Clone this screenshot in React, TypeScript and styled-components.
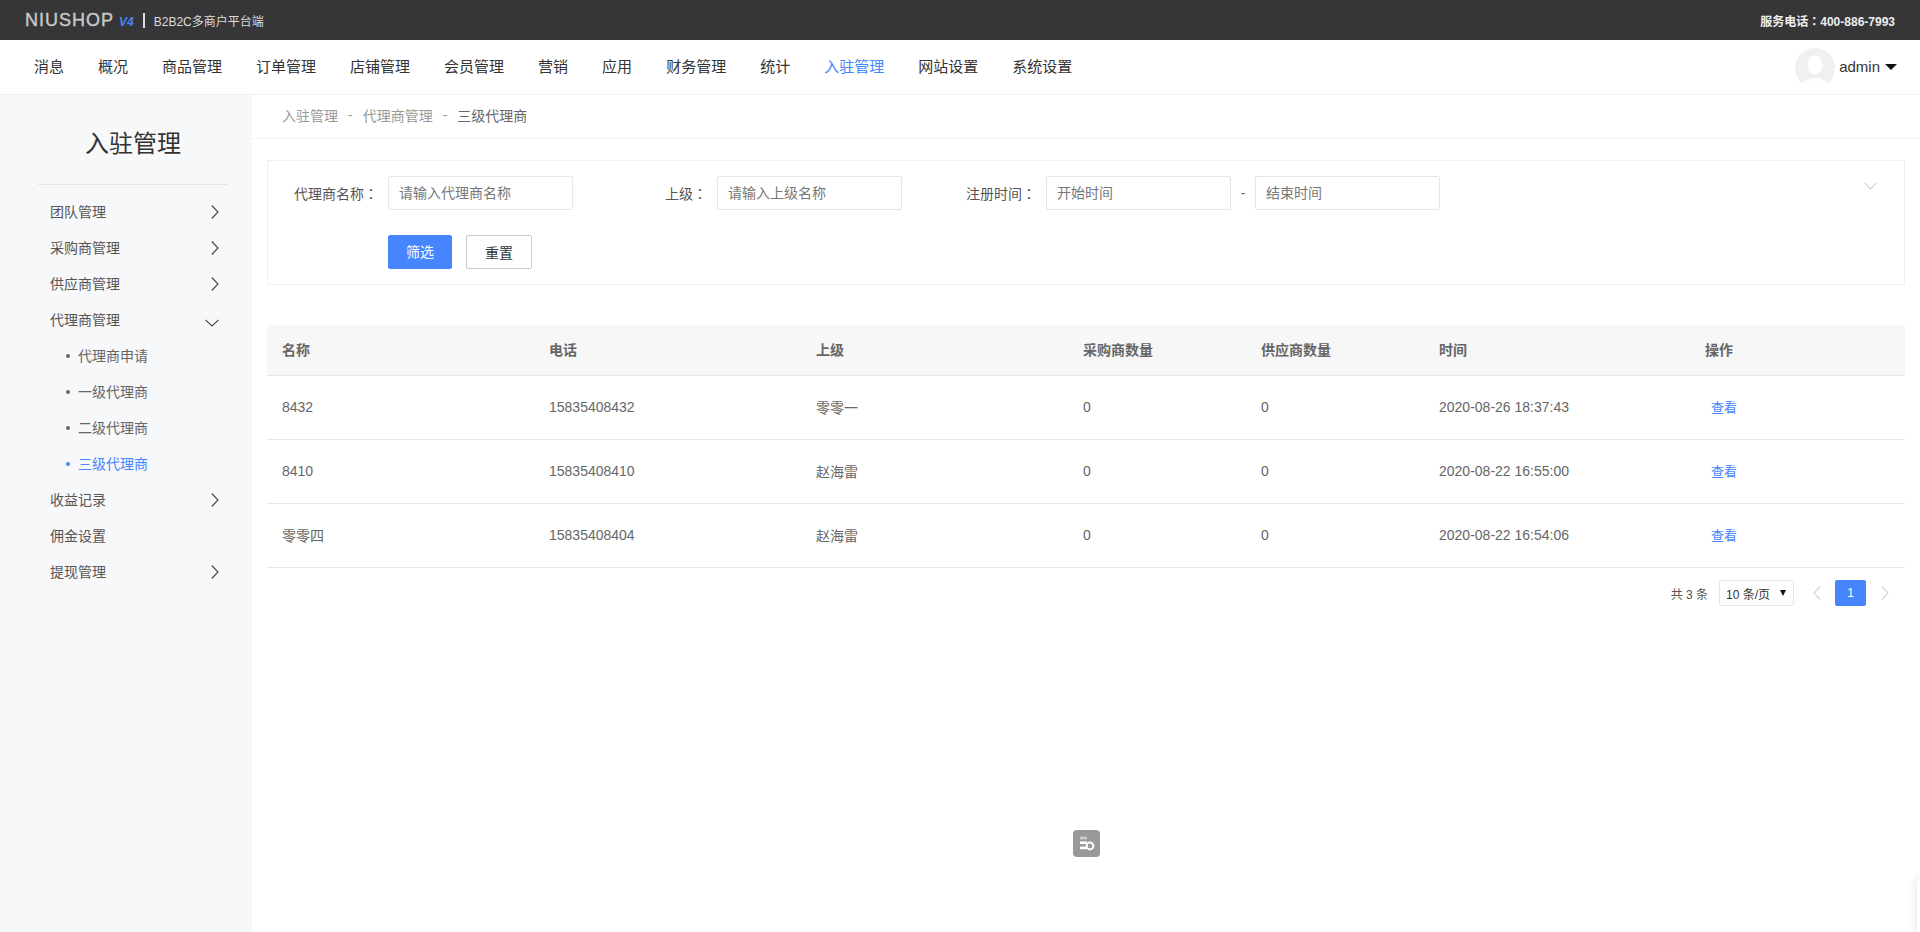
import React from "react";
import styled, { createGlobalStyle } from "styled-components";

const blue = "#4685fd";

const GlobalStyle = createGlobalStyle`
  * {
    box-sizing: border-box;
  }

  html,
  body {
    margin: 0;
    background: #fff;
    font-family: "Liberation Sans", "Noto Sans CJK SC", sans-serif;
    font-size: 14px;
    color: #666;
  }
`;

const Page = styled.div`
  position: relative;
  display: flex;
  flex-direction: column;
  height: 932px;
  overflow: hidden;
`;

const TopBar = styled.header`
  display: flex;
  align-items: center;
  justify-content: space-between;
  flex: none;
  height: 40px;
  padding: 0 25px;
  background: #363638;
  color: #ddd;
  font-size: 12px;
`;

const Brand = styled.div`
  display: flex;
  align-items: center;
`;

const LogoName = styled.span`
  color: #c9c9c9;
  font-size: 18px;
  letter-spacing: 1px;
  line-height: 40px;
  -webkit-text-stroke: 0.4px #c9c9c9;
`;

const LogoVersion = styled.span`
  margin: 3px 0 0 5px;
  color: ${blue};
  font-size: 12px;
  font-style: italic;
  font-weight: 700;
`;

const BrandDivider = styled.i`
  width: 2px;
  height: 15px;
  margin: 0 9px;
  background: #ddd;
`;

/* Fullwidth colon sits centred in the TC cut, as it does in the reference */
const Colon = styled.span`
  font-family: "Noto Sans CJK TC", sans-serif;
`;

const Hotline = styled.strong`
  color: #eee;
  font-weight: 700;
`;

const MainNav = styled.nav`
  display: flex;
  align-items: center;
  flex: none;
  height: 55px;
  padding: 0 23px 0 34px;
  border-bottom: 1px solid #f1f1f1;
`;

const NavItems = styled.div`
  display: flex;
  flex: 1;
  gap: 34px;
`;

const NavItem = styled.a<{ $active?: boolean }>`
  color: ${(p) => (p.$active ? blue : "#333")};
  font-size: 15px;
  line-height: 20px;
`;

const UserBox = styled.div`
  display: flex;
  align-items: center;
  color: #333;
  font-size: 15px;
`;

const Avatar = styled.svg`
  display: block;
  width: 40px;
  height: 40px;
  margin: 2px 4px 0 0;
`;

const UserName = styled.span`
  margin-bottom: 2px;
`;

const UserCaret = styled.i`
  width: 0;
  height: 0;
  margin-left: 5px;
  border-style: solid;
  border-width: 6px 6px 0;
  border-color: #111 transparent transparent;
`;

const Body = styled.div`
  display: flex;
  flex: 1;
  min-height: 0;
`;

const Sidebar = styled.aside`
  flex: none;
  width: 252px;
  background: #f7f8fa;
`;

const SidebarTitle = styled.h2`
  margin: 0 24px 9px 38px;
  padding: 25px 0 16px;
  border-bottom: 1px solid #e6e6e6;
  color: #333;
  font-size: 24px;
  font-weight: 400;
  line-height: 48px;
  text-align: center;
`;

const MenuRow = styled.a`
  display: flex;
  align-items: center;
  justify-content: space-between;
  height: 36px;
  padding: 0 33px 2px 50px;
  color: #555;

  svg {
    margin-top: 2px;
  }
`;

const SubRow = styled.a<{ $active?: boolean }>`
  display: flex;
  align-items: center;
  gap: 8px;
  height: 36px;
  padding: 0 0 2px 66px;
  color: ${(p) => (p.$active ? blue : "#666")};

  &::before {
    content: "";
    width: 4px;
    height: 4px;
    margin-top: 2px;
    border-radius: 50%;
    background: ${(p) => (p.$active ? blue : "#666")};
  }
`;

const Main = styled.main`
  flex: 1;
  min-width: 0;
`;

const Crumbs = styled.div`
  display: flex;
  align-items: center;
  gap: 10px;
  height: 44px;
  padding: 0 0 3px 30px;
  border-bottom: 1px solid #f1f1f1;
  color: #999;
`;

const CrumbCurrent = styled.span`
  color: #666;
`;

const Content = styled.div`
  padding: 21px 15px 0;
`;

const FilterPanel = styled.section`
  position: relative;
  height: 125px;
  padding-top: 15px;
  border: 1px solid #f1f1f1;
`;

const FilterRow = styled.div`
  display: flex;
  align-items: center;
`;

const FilterField = styled.div`
  display: flex;
  align-items: center;
  margin-right: 24px;
`;

const FieldLabel = styled.label`
  flex: none;
  width: 120px;
  padding-right: 10px;
  color: #555;
  text-align: right;
`;

const TextInput = styled.input`
  flex: none;
  width: 185px;
  height: 34px;
  padding: 0 10px;
  border: 1px solid #e6e6e6;
  border-radius: 2px;
  outline: none;
  background: #fff;
  color: #666;
  font: inherit;

  &::placeholder {
    color: #777;
    opacity: 1;
  }
`;

const DateDash = styled.span`
  width: 24px;
  text-align: center;
`;

const ButtonRow = styled.div`
  display: flex;
  gap: 14px;
  margin: 25px 0 0 120px;
`;

const Button = styled.button<{ $primary?: boolean }>`
  width: ${(p) => (p.$primary ? "64px" : "66px")};
  height: 34px;
  padding: ${(p) => (p.$primary ? "0 0 3px" : "0")};
  border: 1px solid ${(p) => (p.$primary ? blue : "#ccc")};
  border-radius: 2px;
  background: ${(p) => (p.$primary ? blue : "#fff")};
  color: ${(p) => (p.$primary ? "#fff" : "#333")};
  font: inherit;
`;

const CollapseIcon = styled.svg`
  position: absolute;
  top: 21px;
  right: 27px;
  display: block;
`;

const Table = styled.table`
  width: 100%;
  margin-top: 40px;
  border-spacing: 0;
  table-layout: fixed;
`;

const HeadCell = styled.th`
  height: 51px;
  padding: 0 15px 2px;
  border-bottom: 1px solid #e6e6e6;
  background: #f7f7f7;
  color: #666;
  font-weight: 700;
  text-align: left;
`;

const Cell = styled.td`
  height: 64px;
  padding: 0 15px 2px;
  border-bottom: 1px solid #e6e6e6;
  color: #666;
`;

const ViewLink = styled.a`
  margin-left: 6px;
  color: ${blue};
  font-size: 13px;
`;

const Pager = styled.div`
  display: flex;
  align-items: center;
  justify-content: flex-end;
  height: 26px;
  margin-top: 12px;
  padding-right: 16px;
  color: #555;
  font-size: 12px;
`;

const PageSize = styled.div`
  display: flex;
  align-items: center;
  justify-content: space-between;
  width: 75px;
  height: 26px;
  margin: 0 19px 0 11px;
  padding: 0 7px 0 6px;
  border: 1px solid #e6e6e6;
  border-radius: 2px;
  color: #333;

  &::after {
    content: "";
    border-style: solid;
    border-width: 6px 3.5px 0;
    border-color: #111 transparent transparent;
  }
`;

const PageNumber = styled.span`
  width: 31px;
  height: 26px;
  margin: 0 15px 0 14px;
  border-radius: 2px;
  background: ${blue};
  color: #fff;
  line-height: 26px;
  text-align: center;
`;

const FloatBadge = styled.div`
  position: absolute;
  top: 830px;
  left: 1073px;
  width: 27px;
  height: 27px;
  border-radius: 4px;
  background: #999;
`;

const DrawerEdge = styled.div`
  position: absolute;
  top: 877px;
  right: -4px;
  width: 7px;
  height: 70px;
  border-radius: 5px 0 0 0;
  background: #fff;
  box-shadow: 0 0 8px rgba(0, 0, 0, 0.14);
`;

const Chevron = ({ dir, color = "#444" }: { dir: "right" | "left" | "down"; color?: string }) => {
  if (dir === "down") {
    return (
      <svg width="14" height="8" viewBox="0 0 14 8" style={{ marginTop: 8 }}>
        <polyline points="0.5,0.8 7,7 13.5,0.8" fill="none" stroke={color} strokeWidth="1.1" />
      </svg>
    );
  }
  return (
    <svg width="8" height="14" viewBox="0 0 8 14">
      <polyline
        points={dir === "right" ? "0.8,0.5 7,7 0.8,13.5" : "7.2,0.5 1,7 7.2,13.5"}
        fill="none"
        stroke={color}
        strokeWidth="1.1"
      />
    </svg>
  );
};

const navItems = ["消息", "概况", "商品管理", "订单管理", "店铺管理", "会员管理", "营销", "应用", "财务管理", "统计", "入驻管理", "网站设置", "系统设置"];

const columns: [string, number][] = [
  ["名称", 267],
  ["电话", 267],
  ["上级", 267],
  ["采购商数量", 178],
  ["供应商数量", 178],
  ["时间", 266],
  ["操作", 215],
];

const rows = [
  ["8432", "15835408432", "零零一", "0", "0", "2020-08-26 18:37:43"],
  ["8410", "15835408410", "赵海雷", "0", "0", "2020-08-22 16:55:00"],
  ["零零四", "15835408404", "赵海雷", "0", "0", "2020-08-22 16:54:06"],
];

export default function App() {
  return (
    <Page>
      <GlobalStyle />
      <TopBar>
        <Brand>
          <LogoName>NIUSHOP</LogoName>
          <LogoVersion>V4</LogoVersion>
          <BrandDivider />
          <span>B2B2C多商户平台端</span>
        </Brand>
        <Hotline>服务电话<Colon>：</Colon>400-886-7993</Hotline>
      </TopBar>

      <MainNav>
        <NavItems>
          {navItems.map((item) => (
            <NavItem key={item} $active={item === "入驻管理"}>
              {item}
            </NavItem>
          ))}
        </NavItems>
        <UserBox>
          <Avatar viewBox="0 0 40 40">
            <defs>
              <clipPath id="avatar-clip">
                <circle cx="20" cy="20" r="20" />
              </clipPath>
            </defs>
            <circle cx="20" cy="20" r="20" fill="#f0f0f0" />
            <g clipPath="url(#avatar-clip)" fill="#fff">
              <ellipse cx="20" cy="17" rx="7.5" ry="9.5" />
              <ellipse cx="20" cy="42" rx="16" ry="12" />
            </g>
          </Avatar>
          <UserName>admin</UserName>
          <UserCaret />
        </UserBox>
      </MainNav>

      <Body>
        <Sidebar>
          <SidebarTitle>入驻管理</SidebarTitle>
          <MenuRow>团队管理<Chevron dir="right" /></MenuRow>
          <MenuRow>采购商管理<Chevron dir="right" /></MenuRow>
          <MenuRow>供应商管理<Chevron dir="right" /></MenuRow>
          <MenuRow>代理商管理<Chevron dir="down" /></MenuRow>
          <SubRow>代理商申请</SubRow>
          <SubRow>一级代理商</SubRow>
          <SubRow>二级代理商</SubRow>
          <SubRow $active>三级代理商</SubRow>
          <MenuRow>收益记录<Chevron dir="right" /></MenuRow>
          <MenuRow>佣金设置</MenuRow>
          <MenuRow>提现管理<Chevron dir="right" /></MenuRow>
        </Sidebar>

        <Main>
          <Crumbs>
            <span>入驻管理</span>
            <span>-</span>
            <span>代理商管理</span>
            <span>-</span>
            <CrumbCurrent>三级代理商</CrumbCurrent>
          </Crumbs>

          <Content>
            <FilterPanel>
              <FilterRow>
                <FilterField>
                  <FieldLabel>代理商名称<Colon>：</Colon></FieldLabel>
                  <TextInput placeholder="请输入代理商名称" />
                </FilterField>
                <FilterField>
                  <FieldLabel>上级<Colon>：</Colon></FieldLabel>
                  <TextInput placeholder="请输入上级名称" />
                </FilterField>
                <FilterField>
                  <FieldLabel>注册时间<Colon>：</Colon></FieldLabel>
                  <TextInput placeholder="开始时间" />
                  <DateDash>-</DateDash>
                  <TextInput placeholder="结束时间" />
                </FilterField>
              </FilterRow>
              <ButtonRow>
                <Button $primary>筛选</Button>
                <Button>重置</Button>
              </ButtonRow>
              <CollapseIcon width="13" height="8" viewBox="0 0 13 8">
                <polyline points="0.5,0.5 6.5,7 12.5,0.5" fill="none" stroke="#ccc" strokeWidth="1.1" />
              </CollapseIcon>
            </FilterPanel>

            <Table>
              <colgroup>
                {columns.map(([title, width]) => (
                  <col key={title} width={width} />
                ))}
              </colgroup>
              <thead>
                <tr>
                  {columns.map(([title]) => (
                    <HeadCell key={title}>{title}</HeadCell>
                  ))}
                </tr>
              </thead>
              <tbody>
                {rows.map((row) => (
                  <tr key={row[1]}>
                    {row.map((value, i) => (
                      <Cell key={i}>{value}</Cell>
                    ))}
                    <Cell>
                      <ViewLink>查看</ViewLink>
                    </Cell>
                  </tr>
                ))}
              </tbody>
            </Table>

            <Pager>
              <span>共 3 条</span>
              <PageSize>10 条/页</PageSize>
              <Chevron dir="left" color="#d5d5d5" />
              <PageNumber>1</PageNumber>
              <Chevron dir="right" color="#d5d5d5" />
            </Pager>
          </Content>
        </Main>
      </Body>

      <FloatBadge>
        <svg width="27" height="27" viewBox="0 0 27 27">
          <rect x="7" y="6.6" width="7" height="2.8" fill="#ccc" />
          <rect x="7" y="11.4" width="7" height="2.6" fill="#fff" />
          <rect x="7" y="16.6" width="7" height="2.6" fill="#fff" />
          <circle cx="17" cy="16" r="3.4" fill="#999" stroke="#fff" strokeWidth="2" />
        </svg>
      </FloatBadge>
      <DrawerEdge />
    </Page>
  );
}
